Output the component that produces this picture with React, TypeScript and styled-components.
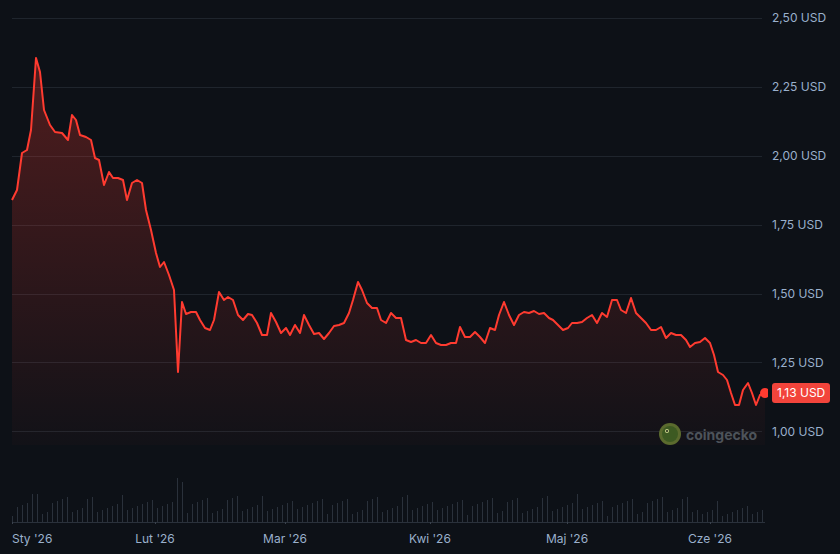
import React from "react";
import styled, { createGlobalStyle } from "styled-components";

const Global = createGlobalStyle`
  html, body { margin: 0; padding: 0; background: #0d1117; }
  body { font-family: Inter, "Noto Sans", sans-serif; }
`;

const Page = styled.div`
  position: relative;
  width: 840px;
  height: 554px;
  background: #0d1117;
  display: flex;
  overflow: hidden;
`;

const ChartCol = styled.div`
  width: 768px;
  display: flex;
  flex-direction: column;
`;

const AxisCol = styled.div`
  display: flex;
  flex-direction: column;
  gap: 53px;
  padding: 10px 0 0 4px;
`;

const AxisLabel = styled.div`
  font-size: 12px;
  line-height: 16px;
  color: #9ab0cc;
  white-space: nowrap;
`;

const DateRow = styled.div`
  position: relative;
  height: 24px;
`;

const DateLabel = styled.span<{ $x: number; $first?: boolean }>`
  position: absolute;
  left: ${(p) => p.$x}px;
  top: 7px;
  transform: ${(p) => (p.$first ? "none" : "translateX(-50%)")};
  font-size: 12px;
  color: #9ab0cc;
  white-space: nowrap;
`;

const Badge = styled.div`
  position: absolute;
  left: 772px;
  top: 383px;
  height: 20px;
  padding: 0 5px;
  border-radius: 3px;
  background: #f2443b;
  color: #fff;
  font-size: 12px;
  line-height: 20px;
`;

const Logo = styled.div`
  position: absolute;
  left: 659px;
  top: 423px;
  display: flex;
  align-items: center;
  gap: 5px;
  font-size: 14px;
  font-weight: 700;
  color: #4d535a;
`;

const pts: [number, number][] = [
  [12,200],[17,190],[22,153],[27,150],[31,130],[36,58],[40,72],[44,110],[50,125],[55,132],[62,133],[68,140],[72,115],[76,120],[80,135],[86,137],[91,140],[95,158],[99,160],[104,185],[109,172],[113,178],[118,178],[123,180],[127,200],[132,183],[137,180],[142,183],[146,210],[151,230],[156,253],[160,267],[164,262],[169,275],[174,290],[178,372],[182,302],[186,314],[191,312],[196,312],[200,320],[205,328],[210,330],[214,320],[219,292],[224,300],[228,297],[233,300],[238,315],[243,320],[248,314],[252,315],[257,323],[262,335],[267,335],[271,313],[276,322],[281,333],[286,328],[290,335],[295,325],[300,333],[304,315],[309,325],[314,334],[319,333],[324,339],[329,333],[334,326],[339,325],[344,323],[349,313],[353,300],[358,282],[362,290],[367,303],[372,308],[377,308],[381,320],[386,323],[391,313],[396,318],[401,318],[406,340],[411,342],[416,340],[421,343],[426,343],[431,335],[436,343],[441,345],[446,345],[451,343],[456,343],[460,327],[465,337],[470,337],[475,332],[480,337],[485,343],[490,328],[495,330],[499,315],[504,302],[509,315],[514,325],[519,315],[524,312],[529,313],[534,311],[539,314],[544,313],[549,318],[553,320],[558,325],[563,330],[568,328],[572,323],[577,323],[582,322],[587,318],[592,315],[597,323],[602,313],[607,317],[612,300],[617,300],[621,310],[626,313],[631,298],[636,313],[641,318],[646,323],[651,330],[656,330],[661,327],[666,338],[671,333],[676,335],[681,335],[686,340],[690,347],[695,343],[700,342],[705,338],[710,343],[714,355],[718,372],[723,375],[727,380],[731,393],[735,405],[739,405],[743,390],[748,383],[752,393],[756,405],[760,395],[765,393],
];

const line = pts.map((p, i) => `${i ? "L" : "M"}${p[0]},${p[1]}`).join(" ");
const area = `${line} L765,445 L12,445 Z`;

const grid = [18, 87, 156, 225, 294, 362, 431];
const labels = ["2,50 USD", "2,25 USD", "2,00 USD", "1,75 USD", "1,50 USD", "1,25 USD", "1,00 USD"];

const vols: number[] = [];
for (let i = 0; i < 151; i++) {
  const x = 12 + i * 5;
  let h = 6 + ((i * 37) % 17) + ((i * 13) % 7);
  if (i === 33) h = 44;
  if (i === 34) h = 40;
  if (i === 4 || i === 5) h = 28;
  vols.push(h + (x > 700 ? -6 : 0));
}

const months: [string, number, boolean?][] = [
  ["Sty '26", 12, true], ["Lut '26", 155], ["Mar '26", 285], ["Kwi '26", 430], ["Maj '26", 567], ["Cze '26", 710],
];

export default function App() {
  return (
    <>
      <Global />
      <Page>
        <ChartCol>
          <svg width={768} height={445}>
            <defs>
              <linearGradient id="fill" x1="0" y1="0" x2="0" y2="1">
                <stop offset="0" stopColor="#ff3b30" stopOpacity="0.28" />
                <stop offset="1" stopColor="#ff3b30" stopOpacity="0.02" />
              </linearGradient>
            </defs>
            {grid.map((y) => (
              <line key={y} x1={12} x2={762} y1={y + 0.5} y2={y + 0.5} stroke="#1f252d" />
            ))}
            <path d={area} fill="url(#fill)" />
            <path d={line} fill="none" stroke="#ff3b30" strokeWidth={2} strokeLinejoin="round" />
            <circle cx={765} cy={393} r={5} fill="#ff3b30" />
          </svg>
          <svg width={768} height={79}>
            {vols.map((h, i) => (
              <line key={i} x1={12 + i * 5 + 0.5} x2={12 + i * 5 + 0.5} y1={77} y2={77 - h} stroke="#2a313b" />
            ))}
            <line x1={12} x2={765} y1={77.5} y2={77.5} stroke="#2a313b" />
            {months.map((m) => (
              <line key={m[0]} x1={m[1] + 0.5} x2={m[1] + 0.5} y1={77} y2={79} stroke="#3a424d" />
            ))}
          </svg>
          <DateRow>
            {months.map((m) => (
              <DateLabel key={m[0]} $x={m[1]} $first={m[2]}>{m[0]}</DateLabel>
            ))}
          </DateRow>
        </ChartCol>
        <AxisCol>
          {labels.map((l) => (
            <AxisLabel key={l}>{l}</AxisLabel>
          ))}
        </AxisCol>
        <Badge>1,13 USD</Badge>
        <Logo>
          <svg width={22} height={22} viewBox="0 0 22 22">
            <circle cx={11} cy={11} r={11} fill="#5b6b2e" />
            <circle cx={11} cy={11} r={8} fill="#3d5a22" />
            <circle cx={8} cy={8} r={2} fill="#c7d08a" />
            <circle cx={8} cy={8} r={1} fill="#1b2410" />
          </svg>
          coingecko
        </Logo>
      </Page>
    </>
  );
}
